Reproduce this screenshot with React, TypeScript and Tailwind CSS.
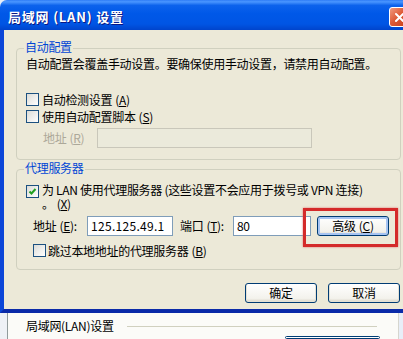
import React from 'react';

const Check = ({ checked }: { checked?: boolean }) => (
  <span className="w-[13px] h-[13px] shrink-0 border border-[#1c5180] bg-[linear-gradient(135deg,#dcdcd7,#ffffff)] flex items-center justify-center">
    {checked && (
      <svg width="11" height="11" viewBox="0 0 11 11">
        <path d="M2.5 5.5 L4.5 7.5 L8.5 3" stroke="#21a121" strokeWidth="2" fill="none" />
      </svg>
    )}
  </span>
);

const Key = ({ k }: { k: string }) => (
  <span className="ml-[3px]">
    {'('}
    <u>{k}</u>
    {')'}
  </span>
);

const Group = ({ title, children, className }: { title: string; children: React.ReactNode; className?: string }) => (
  <div className={`relative w-[385px] border border-[#d0d0bf] rounded-[4px] flex flex-col ${className ?? ''}`}>
    <span className="absolute left-[7px] -top-[9px] px-[1px] bg-[#ece9d8] text-[#0046d5] leading-[14px]">{title}</span>
    {children}
  </div>
);

const XpButton = ({ children, focused }: { children: React.ReactNode; focused?: boolean }) => (
  <div
    className={`w-[72px] h-[20px] rounded-[3px] border border-[#003c74] flex items-center justify-center leading-[14px] text-black bg-[linear-gradient(#ffffff,#f3f2ec_80%,#d8d3c6)] ${
      focused ? 'shadow-[inset_0_0_0_2px_#a6c4f2]' : 'shadow-[inset_0_-1px_0_1px_#e3e1d6]'
    }`}
  >
    {children}
  </div>
);

export default function App() {
  return (
    <div className="relative w-[403px] h-[339px] overflow-hidden bg-[#e8eef8] font-['Noto_Sans_CJK_SC','Liberation_Sans',sans-serif] text-[12px] tracking-[-0.3px] text-black">
      {/* dialog */}
      <div className="w-[415px] flex flex-col">
        {/* title bar */}
        <div className="h-[30px] rounded-t-[7px] pt-[4px] flex items-center justify-between bg-[linear-gradient(#2f7cf6_0%,#4a96ff_6%,#0c62ec_18%,#0058e8_45%,#0055e4_80%,#0044cc_100%)]">
          <span className="pl-[8px] text-white font-bold text-[13px] leading-[16px] tracking-[0.8px] [text-shadow:1px_1px_0_#0a1883]">
            局域网 (LAN) 设置
          </span>
          <div className="mr-[5px] w-[21px] h-[20px] rounded-[3px] border border-white bg-[linear-gradient(135deg,#f09a7f,#de5a36_45%,#c43a18)] flex items-center justify-center">
            <svg width="11" height="11" viewBox="0 0 11 11">
              <path d="M2 2 L9 9 M9 2 L2 9" stroke="#fff" strokeWidth="2" strokeLinecap="round" />
            </svg>
          </div>
        </div>

        {/* body */}
        <div className="bg-[#ece9d8] border-l-[4px] border-r-[4px] border-b-[4px] border-l-[#0b46d8] border-r-[#0b46d8] border-b-[#0a2aa8] pl-[12px] pt-[18px] pb-[6px] flex flex-col">
          <Group title="自动配置">
            <div className="pl-[9px] pt-[7px] pb-[11px] flex flex-col">
              <div className="leading-[16px] whitespace-nowrap">自动配置会覆盖手动设置。要确保使用手动设置，请禁用自动配置。</div>
              <div className="mt-[21px] h-[13px] flex items-center gap-[3px] whitespace-nowrap">
                <Check />
                <span className="leading-[14px]">
                  自动检测设置<Key k="A" />
                </span>
              </div>
              <div className="mt-[4px] h-[13px] flex items-center gap-[3px] whitespace-nowrap">
                <Check />
                <span className="leading-[14px]">
                  使用自动配置脚本<Key k="S" />
                </span>
              </div>
              <div className="mt-[5px] h-[20px] flex items-center">
                <span className="ml-[17px] w-[54px] text-[#aca899] leading-[14px] whitespace-nowrap">
                  地址<Key k="R" />
                </span>
                <div className="w-[215px] h-[20px] border border-[#c9c7ba] bg-[#ebeadb]" />
              </div>
            </div>
          </Group>

          <Group title="代理服务器" className="mt-[9px]">
            <div className="pl-[9px] pt-[12px] pb-[12px] flex flex-col">
              <div className="flex items-start gap-[3px]">
                <span className="mt-[3px]">
                  <Check checked />
                </span>
                <div className="flex flex-col whitespace-nowrap">
                  <span className="leading-[15px]">为 LAN 使用代理服务器 (这些设置不会应用于拨号或 VPN 连接)</span>
                  <span className="leading-[14px]">
                    。<Key k="X" />
                  </span>
                </div>
              </div>
              <div className="mt-[5px] h-[20px] flex items-center">
                <span className="ml-[7px] w-[54px] leading-[14px] whitespace-nowrap">
                  地址<Key k="E" />:
                </span>
                <div className="w-[86px] h-[20px] border border-[#7f9db9] bg-white pl-[3px] leading-[18px] tracking-[0.3px]">
                  125.125.49.1
                </div>
                <span className="ml-[7px] w-[53px] leading-[14px] whitespace-nowrap">
                  端口<Key k="T" />:
                </span>
                <div className="w-[78px] h-[20px] border border-[#7f9db9] bg-white pl-[3px] leading-[18px]">80</div>
                <div className="ml-[6px]">
                  <XpButton focused>
                    高级<Key k="C" />
                  </XpButton>
                </div>
              </div>
              <div className="mt-[8px] ml-[7px] h-[13px] flex items-center gap-[2px] whitespace-nowrap">
                <Check />
                <span className="leading-[14px]">
                  跳过本地地址的代理服务器<Key k="B" />
                </span>
              </div>
            </div>
          </Group>

          <div className="w-[385px] mt-[13px] flex justify-end gap-[11px] pr-[1px]">
            <XpButton>确定</XpButton>
            <XpButton>取消</XpButton>
          </div>
        </div>
      </div>

      {/* underlying Internet options page */}
      <div className="h-[26px] flex">
        <div className="w-[7px] bg-[#eef1f6]" />
        <div className="w-px bg-[#919b9c]" />
        <div className="flex-1 bg-[#fbfbf8] border-r border-r-[#d6d6cf] mr-[4px] pt-[6px] flex flex-col">
          <div className="h-[14px] flex items-center pl-[18px]">
            <span className="leading-[14px] whitespace-nowrap">局域网(LAN)设置</span>
            <div className="ml-[13px] w-[250px] h-px bg-[#d0d0bf]" />
          </div>
          <div className="mt-[3px] ml-[277px] w-[95px] h-[20px] rounded-[3px] border border-[#003c74] bg-white" />
        </div>
      </div>

      {/* red annotation box */}
      <div className="absolute left-[303px] top-[208px] w-[95px] h-[39px] border-[3px] border-[#d42a2a] shadow-[0_0_2px_#e07070]" />
    </div>
  );
}
